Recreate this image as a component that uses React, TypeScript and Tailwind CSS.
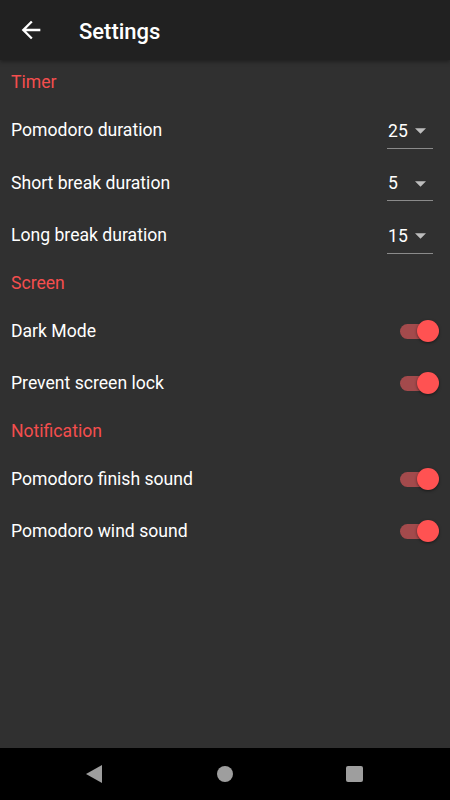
import React from "react";

const font = { fontFamily: "Roboto, 'Noto Sans', sans-serif" };

function Dropdown({ value }: { value: string }) {
  return (
    <div className="mt-[6px] mr-[6px] flex w-[46px] flex-col border-b border-[#8a8a8a] pb-[4px]">
      <div className="flex h-[26px] items-center justify-between pl-[1px] pr-[7px]">
        <span className="text-[17.6px] leading-[26px] text-white">{value}</span>
        <svg width="11" height="6" viewBox="0 0 10 5" className="mt-[1px]">
          <path d="M0 0l5 5 5-5z" fill="#bdbdbd" />
        </svg>
      </div>
    </div>
  );
}

function Toggle() {
  return (
    <div className="relative h-[22px] w-[39px]">
      <div className="absolute left-0 top-[4px] h-[15px] w-[36px] rounded-full bg-[#a34a4c]" />
      <div className="absolute right-0 top-[0px] h-[22px] w-[22px] rounded-full bg-[#ff5252] shadow-[0_1px_3px_rgba(0,0,0,0.5)]" />
    </div>
  );
}

function Section({ title }: { title: string }) {
  return (
    <div className="flex h-[43px] items-center px-[11px] text-[17.6px] text-[#f44e4e]">
      {title}
    </div>
  );
}

function Row({ label, children }: { label: string; children: React.ReactNode }) {
  return (
    <div className="flex h-[52.5px] items-center justify-between px-[11px]">
      <span className="text-[17.6px] text-white">{label}</span>
      {children}
    </div>
  );
}

export default function App() {
  return (
    <div className="flex h-[800px] w-[450px] flex-col bg-[#303030]" style={font}>
      <header className="z-10 flex h-[60px] shrink-0 items-center bg-[#212121] shadow-[0_2px_4px_rgba(0,0,0,0.35)]">
        <svg width="28" height="28" viewBox="0 0 24 24" className="ml-[17px]">
          <path
            d="M20 11H7.83l5.59-5.59L12 4l-8 8 8 8 1.41-1.41L7.83 13H20v-2z"
            fill="#ffffff"
          />
        </svg>
        <h1 className="ml-[34px] pt-[2px] text-[22px] font-medium text-white">Settings</h1>
      </header>
      <main className="flex-1 pt-[1px]">
        <Section title="Timer" />
        <Row label="Pomodoro duration">
          <Dropdown value="25" />
        </Row>
        <Row label="Short break duration">
          <Dropdown value="5" />
        </Row>
        <Row label="Long break duration">
          <Dropdown value="15" />
        </Row>
        <Section title="Screen" />
        <Row label="Dark Mode">
          <Toggle />
        </Row>
        <Row label="Prevent screen lock">
          <Toggle />
        </Row>
        <Section title="Notification" />
        <Row label="Pomodoro finish sound">
          <Toggle />
        </Row>
        <Row label="Pomodoro wind sound">
          <Toggle />
        </Row>
      </main>
      <nav className="flex h-[52px] shrink-0 items-center bg-black">
        <svg width="16" height="18" viewBox="0 0 16 18" className="ml-[86px]">
          <path d="M16 0v18L0 9z" fill="#9e9e9e" />
        </svg>
        <div className="ml-[115px] h-[16px] w-[16px] rounded-full bg-[#9e9e9e]" />
        <div className="ml-[113px] h-[16px] w-[17px] rounded-[2px] bg-[#9e9e9e]" />
      </nav>
    </div>
  );
}
